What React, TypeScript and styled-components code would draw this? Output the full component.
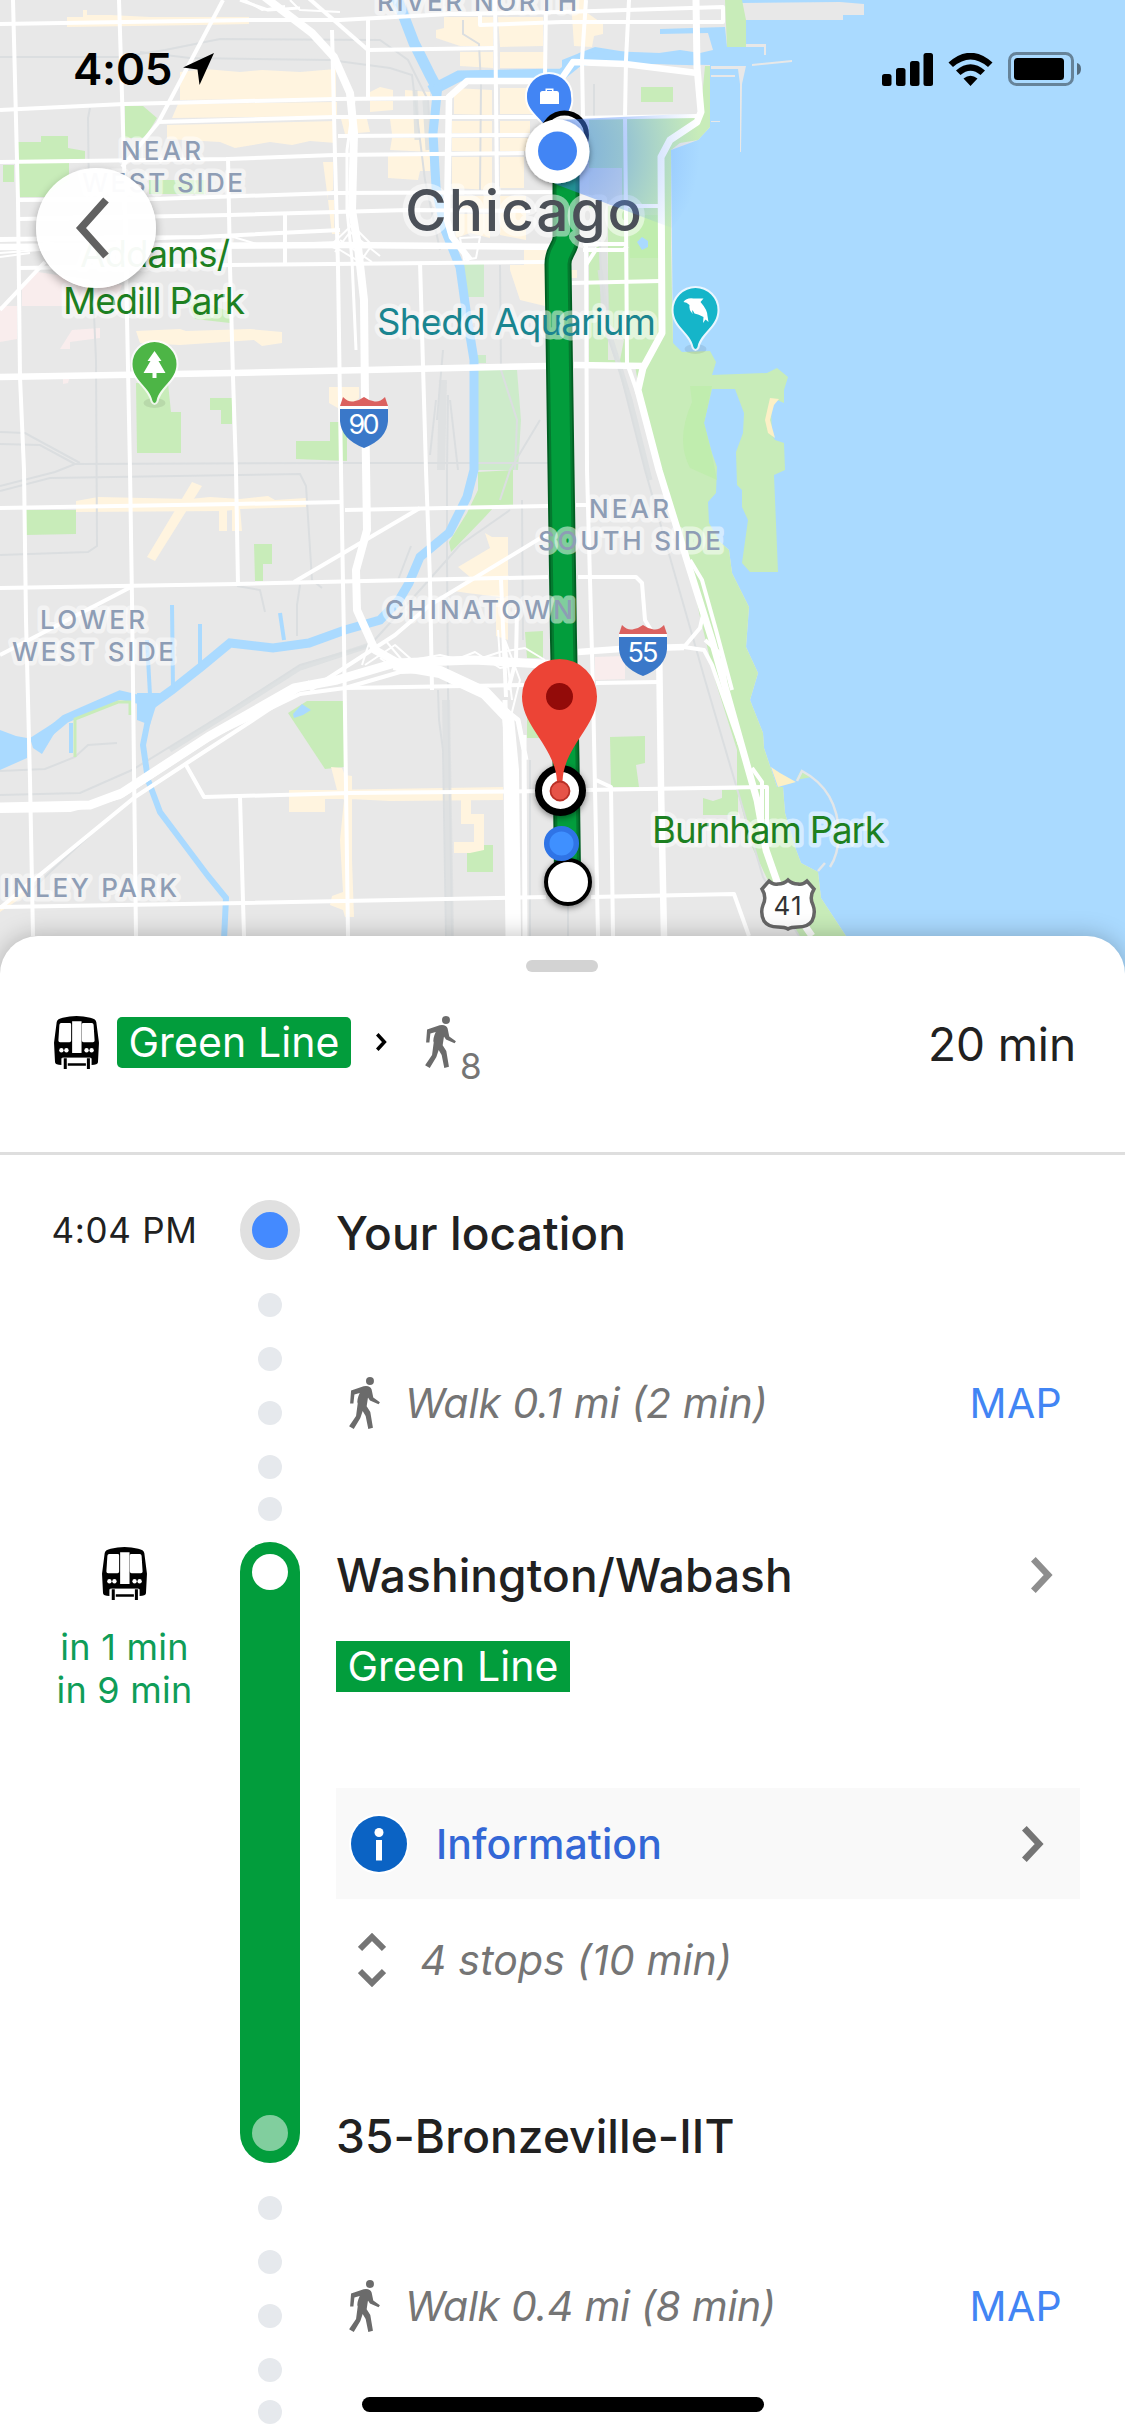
import React from "react";
import styled, { createGlobalStyle } from "styled-components";

const GlobalStyle = createGlobalStyle`
  body { margin: 0; background: #fff; }
  * { box-sizing: border-box; }
`;

const GREEN = "#029d3c";

const Screen = styled.main`
  position: relative;
  width: 1125px;
  height: 2436px;
  overflow: hidden;
  background: #fff;
  font-family: Inter, "Liberation Sans", sans-serif;
  color: #212121;
`;

/* ---------- map ---------- */

const MapArea = styled.section`
  position: relative;
  height: 936px;
`;

const MapCanvas = styled.svg`
  position: absolute;
  inset: 0;
  display: block;
  width: 1125px;
  height: 990px;
  font-family: Inter, "Liberation Sans", sans-serif;
`;

const StatusBar = styled.header`
  position: absolute;
  top: 0;
  left: 0;
  right: 0;
  display: flex;
  align-items: center;
  justify-content: space-between;
  height: 138px;
  padding: 0 44px 0 73px;
  color: #000;
`;

const Clock = styled.div`
  display: flex;
  align-items: center;
  gap: 11px;
  font-size: 44px;
  line-height: 50px;
  font-weight: 600;
  letter-spacing: -0.2px;
`;

const StatusIcons = styled.div`
  display: flex;
  align-items: center;
  gap: 15px;
`;

const BackButton = styled.button`
  position: absolute;
  left: 36px;
  top: 168px;
  display: flex;
  align-items: center;
  justify-content: center;
  width: 120px;
  height: 120px;
  padding: 0 8px 0 0;
  border: 0;
  border-radius: 50%;
  background: rgba(255, 255, 255, 0.96);
  box-shadow: 0 4px 10px rgba(0, 0, 0, 0.32);
`;

/* ---------- sheet ---------- */

const Sheet = styled.section`
  position: relative;
  height: 1500px;
  background: #fff;
  border-radius: 38px 38px 0 0;
  box-shadow: 0 0 24px rgba(0, 0, 0, 0.25);
`;

const SheetHeader = styled.header`
  display: flex;
  flex-direction: column;
  align-items: center;
  height: 219px;
  padding-top: 24px;
  border-bottom: 3px solid #dedede;
`;

const Handle = styled.div`
  width: 72px;
  height: 12px;
  margin-right: 1px;
  border-radius: 6px;
  background: #d3d3d3;
`;

const Summary = styled.div`
  display: flex;
  align-items: flex-start;
  width: 100%;
  margin-top: 44px;
  padding: 0 49px 0 54px;
`;

const LineBadge = styled.span<{ $rounded?: boolean }>`
  display: inline-block;
  height: 51px;
  width: 234px;
  margin-top: ${(p) => (p.$rounded ? "1px" : "0")};
  text-align: center;
  border-radius: ${(p) => (p.$rounded ? "5px" : "0")};
  background: ${GREEN};
  color: #fff;
  font-size: 41px;
  line-height: 50px;
  letter-spacing: 0.1px;
  white-space: nowrap;
`;

const LegSeparator = styled.span`
  display: flex;
  align-items: center;
  height: 51px;
  margin: 0 38px 0 25px;
`;

const WalkMinutes = styled.span`
  margin: 24px 0 0 4px;
  height: 40px;
  font-size: 35px;
  line-height: 52px;
  color: #757575;
`;

const Total = styled.span`
  margin-left: auto;
  font-size: 46px;
  line-height: 56px;
  letter-spacing: -0.1px;
  white-space: nowrap;
`;

const Gap = styled.span<{ $w: number }>`
  flex: none;
  width: ${(p) => p.$w}px;
`;

const Step = styled.article<{ $h: number }>`
  display: grid;
  grid-template-columns: 240px 60px 1fr;
  height: ${(p) => p.$h}px;
`;

const TimeCol = styled.div<{ $top: number }>`
  display: flex;
  flex-direction: column;
  align-items: center;
  padding: ${(p) => p.$top}px 0 0 9px;
`;

const Time = styled.span`
  font-size: 35px;
  line-height: 44px;
  letter-spacing: 0.7px;
  white-space: nowrap;
`;

const Arrivals = styled.div`
  margin-top: 26px;
  color: #0f9d58;
  font-size: 36px;
  line-height: 43px;
  letter-spacing: 0.25px;
  text-align: center;
  white-space: nowrap;
`;

const Rail = styled.div<{ $top: number }>`
  display: flex;
  flex-direction: column;
  align-items: center;
  padding-top: ${(p) => p.$top}px;
`;

const Origin = styled.div`
  width: 60px;
  height: 60px;
  margin-bottom: 33px;
  border: 12px solid #e0e0e0;
  border-radius: 50%;
  background: #448aff;
`;

const Dots = styled.div`
  display: flex;
  flex-direction: column;
  gap: 30px;
`;

const Dot = styled.i`
  width: 24px;
  height: 24px;
  border-radius: 50%;
  background: #e6e9ed;
  &:last-child { margin-top: -12px; }
`;

const RideBar = styled.div`
  display: flex;
  flex-direction: column;
  align-items: center;
  justify-content: space-between;
  height: 621px;
  padding: 12px 0;
  border-radius: 30px;
  background: ${GREEN};
`;

const Stop = styled.i<{ $faded?: boolean }>`
  width: 36px;
  height: 36px;
  border-radius: 50%;
  background: rgba(255, 255, 255, ${(p) => (p.$faded ? 0.5 : 1)});
`;

const Body = styled.div<{ $top: number }>`
  display: flex;
  flex-direction: column;
  align-items: flex-start;
  padding: ${(p) => p.$top}px 0 0 36px;
`;

const Place = styled.h2`
  margin: 0;
  font-size: 46px;
  line-height: 60px;
  font-weight: 500;
  letter-spacing: 0.1px;
  white-space: nowrap;
`;

const Row = styled.div<{ $mt?: number; $h: number; $pl?: number; $pr?: number; $shade?: boolean }>`
  display: flex;
  align-items: center;
  width: ${(p) => (p.$shade ? "744px" : "100%")};
  height: ${(p) => p.$h}px;
  margin-top: ${(p) => p.$mt ?? 0}px;
  padding-left: ${(p) => p.$pl ?? 0}px;
  padding-right: ${(p) => p.$pr ?? 0}px;
  background: ${(p) => (p.$shade ? "#f9f9f9" : "transparent")};
`;

const Detail = styled.span<{ $track?: number }>`
  font-size: 41px;
  line-height: 52px;
  font-style: italic;
  letter-spacing: ${(p) => p.$track ?? 0}px;
  color: #757575;
  white-space: nowrap;
`;

const MapLink = styled.a`
  margin-left: auto;
  font-size: 41px;
  line-height: 52px;
  letter-spacing: 0.3px;
  color: #4285f4;
`;

const InfoLabel = styled.span`
  margin-left: 27px;
  font-size: 41px;
  line-height: 52px;
  font-weight: 500;
  letter-spacing: 0.1px;
  color: #3367d6;
`;

const Push = styled.span`
  display: flex;
  margin-left: auto;
`;

const HomeIndicator = styled.div`
  position: absolute;
  left: 362px;
  bottom: 24px;
  width: 402px;
  height: 15px;
  border-radius: 8px;
  background: #000;
`;

const Glyph = styled.svg`
  display: block;
  flex: none;
`;

/* ---------- icons ---------- */

const TrainIcon = () => (
  <Glyph width="45" height="53" viewBox="0 0 134 158">
    <path d="M8 18Q10 8 26 5Q67 -5 108 5Q124 8 126 18L134 80L131 138Q130 146 112 146V126H22V146Q4 146 3 138L0 80Z" fill="#000" />
    <path d="M21 21H47Q51 21 51 25V73Q51 78 46 78H18Q13 78 13 73L16 26Q17 21 21 21ZM113 21H87Q83 21 83 25V73Q83 78 88 78H116Q121 78 121 73L118 26Q117 21 113 21ZM54 16H82V110H54Z" fill="#fff" />
    <g fill="#fff">
      <circle cx="22" cy="102" r="6.5" /><circle cx="37" cy="102" r="6.5" />
      <circle cx="97" cy="102" r="6.5" /><circle cx="112" cy="102" r="6.5" />
      <path d="M25 124H109V158H25Z" />
    </g>
    <path d="M29 126H38V158H29ZM98 126H107V158H98ZM41 141H95V148H41Z" fill="#000" />
  </Glyph>
);

const WalkIcon = () => (
  <Glyph width="31" height="52" viewBox="0 0 93 157" fill="#6b6b6b">
    <circle cx="63" cy="12" r="12" />
    <path d="M6 41L44 28Q64 25 68 38L73 62L93 76L89 82L63 71L57 62L53 88L64 106L72 153L58 157L50 118L41 103L34 124L14 157L0 149L21 118L26 80Q22 70 32 48L16 53L13 80L3 80Z" />
  </Glyph>
);

const Chevron = ({ color, w = 22, h = 36, s = 6.5 }: { color: string; w?: number; h?: number; s?: number }) => (
  <Glyph width={w} height={h} viewBox={`0 0 ${w} ${h}`} fill="none" stroke={color} strokeWidth={s}>
    <path d={`M${s * 0.36} ${s * 0.36}L${w - s * 0.75} ${h / 2}L${s * 0.36} ${h - s * 0.36}`} />
  </Glyph>
);

const ExpandIcon = () => (
  <Glyph width="28" height="54" viewBox="0 0 28 54" fill="none" stroke="#757575" strokeWidth="6">
    <path d="M2 16L14 4L26 16M2 38L14 50L26 38" />
  </Glyph>
);

const InfoIcon = () => (
  <Glyph width="60" height="60" viewBox="0 0 60 60">
    <circle cx="30" cy="30" r="30" fill="#fff" />
    <circle cx="30" cy="30" r="28" fill="#0b63c4" />
    <circle cx="30" cy="18.500" r="4.500" fill="#fff" />
    <path d="M27 26H33V46.500H27Z" fill="#fff" />
  </Glyph>
);

const LocationArrow = () => (
  <Glyph width="31" height="32" viewBox="0 0 31 32"><path d="M31 0L16.500 32L14.500 16.500L0 14.500Z" /></Glyph>
);

const SignalIcon = () => (
  <Glyph width="51" height="33" viewBox="0 0 51 33">
    <rect x="0" y="21" width="9.500" height="12" rx="2.500" />
    <rect x="14" y="15" width="9.500" height="18" rx="2.500" />
    <rect x="28" y="8" width="9.500" height="25" rx="2.500" />
    <rect x="41.500" y="0" width="9.500" height="33" rx="2.500" />
  </Glyph>
);

const WifiIcon = () => (
  <Glyph width="45" height="33" viewBox="0.500 0 45 33">
    <path d="M1 9.500Q23 -10 45 9.500L40.500 14Q23 -1 5.500 14ZM8.500 17.500Q23 5 37.500 17.500L33 22Q23 13.500 13 22ZM16 25.500Q23 20 30 25.500L23 33Z" />
  </Glyph>
);

const BatteryIcon = () => (
  <Glyph width="73" height="34" viewBox="0 0 73 34">
    <rect x="1.500" y="1.500" width="63" height="31" rx="7" fill="none" stroke="#000" strokeOpacity=".4" strokeWidth="3" />
    <rect x="6" y="6" width="50" height="22" rx="3.500" />
    <path d="M69 11Q73 12 73 17T69 23Z" fillOpacity=".5" />
  </Glyph>
);

/* ---------- map drawing ---------- */

const beige = [
  "M67 17H83V10H87V15H110L150 17H249V24L200 25L67 27Z",
  "M180 72L205 69L240 72L262 70L300 72L336 69V98L180 100Z",
  "M178 104L337 102V116L172 118Z",
  "M167 125L336 121V143L310 141L292 145L270 142L235 148L220 142L167 139Z",
  "M444 17H493V46H460L436 38V30L444 28ZM498 17H543V46L500 47ZM500 52H545V68H500ZM460 52H493V68L460 66Z",
  "M370 92L380 87L393 90V97H370ZM370 101H393V110L370 112ZM405 90L430 92V97H405Z",
  "M341 119H367L370 132L345 134ZM390 119H433V134H392ZM392 138H432V152L390 150ZM388 156H430V171H420L418 180L388 178Z",
  "M454 88L492 90V115L454 114ZM500 88H541V114H500ZM452 121H492V133H452ZM500 121H530V133H500ZM452 138H492V152L452 151ZM500 138H528V151H500ZM452 157H492V190L452 188ZM500 157H524V188H500ZM454 196H492V210H454ZM500 196H526V240L500 235ZM454 214H490V238L470 233L456 238Z",
  "M323 162H333V190L328 192V200H334V227L341 234H332L328 200Z",
  "M524 249H549V307L520 300L510 270L510 265H524Z",
  "M136 331L180 329L186 331L250 329L282 332V343L262 346L254 340L180 345L140 343Z",
  "M329 387H359V398L345 412L329 403Z",
  "M76 501L98 497L190 499L210 497L240 499L268 496L275 500L306 498V507L240 509L225 511L76 512Z",
  "M192 482L202 486L155 561L147 557Z",
  "M219 508H227V531H219ZM232 508H240L242 531H232Z",
  "M485 533L492 537H508V598L467 593L454 591L470 577L458 567L490 548ZM496 598H508V640L496 636Z",
  "M289 790H325V812H289ZM325 790L503 787V800L390 801L350 799H325ZM331 767L342 768L345 775L352 776V860L354 917H345L343 910L330 905L332 896L343 892L340 840L344 800L337 790Z",
  "M461 797H471V814H484V850L470 853H454V842H474V824H461Z",
  "M0 907L30 880V892L0 912Z",
  "M571 0H586V12L603 24V34L594 36L592 47L574 46Z",
  "M571 270H577V278H571Z",
];

const green = [
  "M18 142H41V136H68V148L85 151V159H69V180L45 197H18Z",
  "M3 165H14V182H3Z", "M125 106L143 106L157 118L145 138L125 138Z", "M149 180H206V194H149Z",
  "M136 383H168L171 412H181V453H137Z", "M210 398H232V424H221V410H210Z",
  "M296 441H330V422H347V461L296 459Z", "M185 297L205 302L230 312V323L195 319Z",
  "M26 510H76V534L26 535Z", "M254 544H272V564H263V581H255Z",
  "M288 713L307 701H344V767L325 769Z", "M467 845H493V872H467Z", "M525 632L543 631V658H527Z",
  "M527 713H550V738H527Z", "M610 737L645 736V763L636 765L639 787L611 787Z",
  "M703 798L713 801L722 798V790H738V815H703Z", "M641 87H673V102H641Z",
  "M478 472L513 470V505L494 507L484 518L451 552L449 542L467 513L478 490Z",
];

const rails = [
  "M0 57H120L165 50L220 39L380 40L408 60L428 100L432 160", "M140 52L190 58L330 60L390 68L412 75L425 180L440 250",
  "M90 108L88 118L89 200L96 360L97 546L88 552L0 555", "M0 432L25 433L80 463", "M0 444L40 445L75 464",
  "M0 486L55 472L75 464L340 463L562 463", "M0 491L50 478L300 474L306 486L312 580L322 588",
  "M448 395L447 470V560L448 690L452 936", "M436 400L430 455M450 400L458 470M443 350L437 420",
  "M500 265L501 370L517 420L515 470M540 420L528 440L510 470L500 500",
  "M0 795L80 793L132 770L230 710L300 665L370 645L420 590L460 545L510 510",
  "M438 690L439 720L443 750L446 936", "M0 771L45 769L75 757L88 745L117 743", "M27 895L50 872L90 835L125 805",
  "M237 586L260 590L265 612M300 585L297 605L297 636M411 546L398 580",
  "M463 20V34L479 44L481 85L480 190", "M600 240L602 320L621 375L645 470L705 680L763 877L799 936",
  "M522 500L523 640M530 760V936M568 900V936M594 84V118",
];

const minorRoads = [
  "M13 0L18 200L20 377L24 470L26 620L30 780L33 936", "M119 0L124 160L127 317L130 470L132 600L136 936",
  "M228 157L230 267L233 377L236 470L238 585M240 797L244 936", "M332 30L335 157L338 267L341 470L344 640L348 936",
  "M368 20V98", "M420 262L426 470L430 580L432 690", "M495 0L497 190", "M546 0L545 77",
  "M285 212V263", "M223 0L158 123L122 167", "M305 -5L368 50",
  "M0 24L251 20L340 20L450 14L562 12L723 7V22L562 22L480 25V14", "M368 50L495 48", "M0 110L124 104L334 99L447 98",
  "M158 122L334 117L540 117", "M338 136L530 135", "M0 162L228 159L334 155L524 153",
  "M18 200L155 199L334 193L562 192", "M18 219L230 215L408 210L530 211", "M0 239L200 237L340 230",
  "M18 268L230 265L546 262", "M45 262L0 310", "M0 508L235 504L343 502M345 510L548 506",
  "M0 588L237 584L548 577", "M562 525L430 605L395 635L310 690", "M420 508L294 582", "M131 587L0 655",
  "M0 908L36 878L135 797L187 763L250 722L310 682", "M186 765L204 797L350 793L548 791", "M345 688L524 685",
  "M0 907L244 903L546 897", "M501 580L506 697", "M517 610L516 660L508 690",
  "M586 0L582 60L583 117", "M586 243L587 470L593 690L598 936", "M629 0L626 60L625 117L626 213L627 363L640 400",
  "M575 118L697 116", "M626 206H660", "M583 244H627M583 250H624L627 246M586 265L597 248", "M572 283L661 281",
  "M576 505H588", "M578 577H636L642 583L645 620L652 632", "M684 647L704 650L712 665L740 745", "M684 647L700 628L704 610",
  "M596 683L659 682", "M586 790L767 787V840", "M596 780L611 787L613 936", "M591 897L734 894L749 936",
  "M690 560L702 580L716 630L732 690", "M705 640L722 655L726 690L742 745", "M752 768L762 782V820",
];

const majorRoads = [
  "M0 377L233 373L546 366", "M562 81H467L449 97L447 220L452 237L470 260", "M562 78L573 62L625 64L697 73",
  "M574 365L645 366", "M578 652L620 649L684 647", "M659 640L661 787L664 936", "M0 247L155 246L345 245L562 247",
];

const freeways: [string, number][] = [
  ["M262 -5L312 33L334 57L350 93L354 133L352 210L358 247L364 300L365 400L367 530L356 570L357 610L375 650L400 664", 8],
  ["M354 100L347 150L347 210L352 260L356 350M240 0L268 10L300 8", 3],
  ["M0 807L90 805L122 793L208 737L294 688L337 680L395 663L474 660L560 665", 9],
  ["M0 811L70 810L120 797L215 735L300 694L345 688L400 672L430 671", 4],
  ["M394 664L440 672L485 693L508 717L513 770L515 936", 12], ["M505 700L508 936M524 735L525 936M480 690L518 720L526 760", 5],
  ["M696 0L697 67L701 112L697 122L670 140L661 157L662 333L643 368L638 390L659 470L690 570L712 640L740 740L757 800L766 850L780 890L812 936", 7],
];

const ramps = [
  "M330 246L352 225L372 245L360 262L340 250Z", "M340 240L372 262M335 252L350 232L380 256", "M0 253L40 250L160 239L230 236L260 245L340 242",
  "M0 241L40 240L60 246M0 257L30 253", "M460 238L480 237L476 258L464 260Z", "M365 665L395 645L412 660L440 655L470 662L500 652L525 648L545 660",
  "M380 658L400 672L430 665M450 662L475 652L500 668L530 662M505 640L520 680L510 720M500 660L498 630M512 700L505 640", "M290 0L300 10L340 12M245 0L262 10L285 6",
  "M370 640L362 665M385 640L402 660L440 668",
];

type LabelProps = { x: number; y: number; w: number; size?: number; color: string; weight?: number; children: string };

const Label = ({ x, y, w, size = 26, color, weight = 500, children }: LabelProps) => (
  <text
    x={x} y={y} textLength={w} fontSize={size} fontWeight={weight} fill={color}
    stroke="#fff" strokeOpacity=".5" strokeWidth={size > 40 ? 11 : 9} strokeLinejoin="round" paintOrder="stroke"
  >
    {children}
  </text>
);

const AREA = "#8e9db5";
const PARK = "#1d8021";

const Interstate = ({ x, y, n }: { x: number; y: number; n: string }) => (
  <g transform={`translate(${x} ${y})`}>
    <path d="M3 0Q9 6 15 4Q20 3 24 0Q28 3 33 4Q39 6 45 0L48 9H0Z" fill="#db615f" />
    <path d="M0 9H48V12H0Z" fill="#fff" />
    <path d="M0 12H48V24Q47 42 24 51Q1 42 0 24Z" fill="#3a78c9" />
    <text x="24" y="37" fontSize="27" textAnchor="middle" textLength="31" fill="#fff">{n}</text>
  </g>
);

const PoiPin = ({ x, y, color, children }: { x: number; y: number; color: string; children: React.ReactNode }) => (
  <g transform={`translate(${x} ${y})`}>
    <ellipse cx="0" cy="39" rx="11" ry="5" fill="#000" opacity=".08" />
    <path d="M0 -22A22 22 0 0 0 -22 0C-22 17 -5 22 -2 37Q0 41 2 37C5 22 22 17 22 0A22 22 0 0 0 0 -22Z" fill={color} stroke="#fff" strokeOpacity=".75" strokeWidth="4" paintOrder="stroke" />
    {children}
  </g>
);

const ROUTE = "M566 150V238Q566 243 562 250Q558 257 558 264L561 470L563.500 640L566 760L567.500 872";

const CityMap = () => (
  <MapCanvas viewBox="0 0 1125 990">
    <defs>
      <radialGradient id="beam" gradientUnits="userSpaceOnUse" cx="558" cy="150" r="142">
        <stop offset="0" stopColor="#3f7cf5" stopOpacity=".6" />
        <stop offset=".5" stopColor="#4a86f7" stopOpacity=".38" />
        <stop offset="1" stopColor="#5b95fa" stopOpacity="0" />
      </radialGradient>
      <filter id="drop" x="-30%" y="-30%" width="160%" height="170%">
        <feDropShadow dx="0" dy="2" stdDeviation="3" floodOpacity=".45" />
      </filter>
    </defs>
    <rect width="1125" height="990" fill="#aadaff" />
    <path fill="#e8e8e8" d="M0 0H742V20L746 47H727L725 27L660 29V34L708 33L713 50L700 53L680 50L645 55L595 47L582 52L562 60V70L600 63L710 65V127L698 140L671 150L673 343L690 500L720 542L729 550L732 573L749 607L746 647L758 673L750 700L763 733L764 748L777 787H783L785 813L795 847L801 863L818 872L821 898L846 936L875 990H0Z" />
    <path fill="#e8e8e8" d="M741 3L840 2L864 4V15H843V20H741ZM746 44H766V55H764V47H746ZM711 66H746L742 84L741 152H740V84L738 69H711ZM711 75H735V77H711ZM752 64L792 60V62L752 66ZM711 121H720V122H711Z" />
    <path fill="#c8ecb9" d="M701 0H742L746 20V47H727L725 0Z" />
    <path fill="#c8ecb9" d="M589 118L700 118L705 66H710V127L698 140L680 143L671 150V247L673 343L682 352L710 351L716 362L712 375L767 373L777 368L788 377L784 390V403L775 399L771 407L772 435L775 440L784 443L785 470L774 475L778 572H750L742 563L748 520L742 507V490L737 485L736 452L743 433L744 413L735 389H712L704 423L712 453L717 467L716 493L708 502L709 523L720 542L729 550L732 573L749 607L746 647L758 673L750 700L763 733L764 748L777 787H783L785 813L795 847L801 863L818 872L821 898L846 936L875 990H830L799 936L774 893L752 847L737 790V750L716 683L700 617L688 560L659 467L639 390L635 365H589V250L603 245L603 208H589Z" />
    <path fill="#e8e8e8" d="M589 168H622V206H589ZM596 206H608V360H620L624 340L606 320Z" opacity=".9" />
    <path fill="#c0edae" d="M630 215H659V258H630ZM690 386H712L704 423L712 455L717 480L690 468Q675 440 692 402Z" />
    <path fill="#fcf0c6" d="M770 398L779 399L774 405L770 420L775 438L768 433L765 420ZM771 767L780 773L796 782L778 787Z" />
    <path fill="#c8ecb9" d="M796 780L801 770L812 777Z" />
    <path fill="none" stroke="#e3e6e8" strokeWidth="2.500" d="M797 781L802 771Q838 790 839 835Q838 855 830 867M818 871L825 863" />
    <path fill="#f9eded" d="M0 306H22V285L38 272L122 285L118 295L85 306H17V339L0 342ZM72 330L100 328V338L70 342V349H60ZM63 378L70 376L68 383L63 384ZM595 657L625 656V679L595 680Z" />
    {green.map((d) => <path key={d} d={d} fill="#c8ecb9" />)}
    <path fill="#cdebca" d="M463 263H484V297H467ZM476 355H486V363H476ZM477 370H517L521 420L518 470H478Z" />
    {beige.map((d) => <path key={d} d={d} fill="#fff4df" />)}
    <g fill="none" stroke="#dbdee0" strokeWidth="2">
      {rails.map((d) => <path key={d} d={d} />)}
      <path strokeWidth="8" opacity=".7" d="M446 700L450 936M443 380L441 470M603 250L606 325" />
      <path strokeWidth="5" opacity=".8" d="M600 270L608 330L630 400L650 480M170 750L300 668L370 645M415 90L417 140M425 100L428 150" />
    </g>
    <g fill="none" stroke="#aadaff">
      <path strokeWidth="11" d="M396 -4L414 43L430 75L438 90M430 91L459 76L562 74L582 58L620 57L700 60" />
      <path strokeWidth="9" d="M438 85L433 133L436 187L445 230L460 267L467 317L474 360V470L467 497L449 533L420 557L409 583L399 600L380 620L345 630L309 643L273 648L230 643L201 667L172 690L154 703L120 695L65 719L40 740" />
      <path strokeWidth="6" d="M150 710L143 745L148 780L160 812L184 844L208 876L226 898L224 940" />
      <path strokeWidth="4" d="M172 605L173 690M200 624V668M147 640L150 695M280 613L284 640M71 723V753M660 31H713" />
    </g>
    <path fill="#aadaff" d="M0 730L16 736L27 738V758L0 770ZM137 693H160L150 725L137 720ZM30 738L55 722L60 724L42 754L33 748ZM293 714L302 704L311 710L303 715L294 718ZM637 242L642 237L648 241V247L642 250Z" />
    <path fill="none" stroke="#c8ecb9" strokeWidth="3" d="M75 757V719L118 702H130V715" />
    <g fill="none" stroke="#fff" strokeLinejoin="round">
      <g strokeWidth="4">{minorRoads.map((d) => <path key={d} d={d} />)}</g>
      <g strokeWidth="6.500">{majorRoads.map((d) => <path key={d} d={d} />)}</g>
      {freeways.map(([d, w]) => <path key={d} d={d} strokeWidth={w} />)}
      <g strokeWidth="2">{ramps.map((d) => <path key={d} d={d} />)}</g>
    </g>

    <path d="M549 74A22 22 0 0 0 527 97C527 110 538 115 547 128L566 118C571 105 572 103 571 96A22 22 0 0 0 549 74Z" fill="#4285f4" stroke="#fff" strokeOpacity=".9" strokeWidth="4" paintOrder="stroke" />
    <path d="M540 93.500Q540 91 542.500 91H545.500V88.500H553.500V91H557Q559 91 559 93.500V104H540ZM547 90V91H552V90Z" fill="#fff" fillRule="evenodd" />

    <g fill="none">
      <path d={ROUTE} stroke="#005e22" strokeWidth="27" />
      <path d={ROUTE} stroke="#04792f" strokeWidth="23.500" />
      <path d={ROUTE} stroke={GREEN} strokeWidth="19" />
    </g>
    <circle cx="564.500" cy="135" r="22" fill="#fff" stroke="#000" strokeWidth="5" />

    <Label x={377} y={10.500} w={200} color={AREA}>RIVER NORTH</Label>
    <Label x={121} y={160} w={80} color={AREA}>NEAR</Label>
    <Label x={82} y={192} w={161} color={AREA}>WEST SIDE</Label>
    <Label x={80} y={267} w={150} size={37} color={PARK} weight={400}>Addams/</Label>
    <Label x={63} y={314} w={182} size={37} color={PARK} weight={400}>Medill Park</Label>
    <Label x={405} y={230.500} w={237} size={57} color="#4b5058">Chicago</Label>
    <Label x={377} y={335} w={279} size={37} color="#1a8590" weight={400}>Shedd Aquarium</Label>
    <Label x={589} y={518} w={80} color={AREA}>NEAR</Label>
    <Label x={538} y={550} w={183} color={AREA}>SOUTH SIDE</Label>
    <Label x={385} y={619} w={188} color={AREA}>CHINATOWN</Label>
    <Label x={40} y={629} w={105} color={AREA}>LOWER</Label>
    <Label x={12} y={661} w={162} color={AREA}>WEST SIDE</Label>
    <Label x={3} y={897} w={174} color={AREA}>INLEY PARK</Label>
    <Label x={652} y={843} w={233} size={37} color={PARK} weight={400}>Burnham Park</Label>

    <Interstate x={340} y={397} n="90" />
    <Interstate x={619} y={625} n="55" />
    <g transform="translate(760 878)">
      <path d="M9 3Q13 7 18 6Q24 6 28 2Q32 6 38 6Q43 7 47 3L54 11Q49 19 53 27Q56 35 52 43Q48 49 38 49Q31 49 28 51Q25 49 18 49Q8 49 4 43Q0 35 3 27Q7 19 2 11Z" fill="#fff" stroke="#666" strokeWidth="3.500" />
      <text x="27.500" y="37" fontSize="26" textAnchor="middle" textLength="28" fill="#333">41</text>
    </g>

    <PoiPin x={154.500} y={364} color="#4db546">
      <path d="M0 -13L7 -3H4L11 9H2V14H-2V9H-11L-4 -3H-7Z" fill="#fff" />
    </PoiPin>
    <PoiPin x={695.500} y={310} color="#15b5c9">
      <path d="M-12 -8Q-9 -12.500 -2 -11.500L8 -11.500L5 -8Q12 0 12 6L13 12L10 9.500L7.500 13L8 7Q3 4 -1 3.500L-3 0Q-4 2 -2.500 4Q-7 0 -6 -5Q-9 -8 -12 -8Z" fill="#fff" />
    </PoiPin>

    <path d="M558 120L705 113Q712 180 672 228L555 184Z" fill="url(#beam)" />
    <circle cx="557.500" cy="151.500" r="32" fill="#fff" filter="url(#drop)" />
    <circle cx="557.500" cy="151" r="19.500" fill="#4285f4" />

    <circle cx="568" cy="882" r="22" fill="#fff" stroke="#000" strokeWidth="4" filter="url(#drop)" />
    <circle cx="561.500" cy="843.500" r="14.800" fill="#3f90ff" stroke="#2f74e6" strokeWidth="5.500" />
    <circle cx="560.500" cy="790.500" r="22" fill="#fff" stroke="#000" strokeWidth="7" filter="url(#drop)" />
    <path d="M559.500 659A37.500 37.500 0 0 0 522 696.500C522 727 555 746 557 781H562.500C564 746 597 727 597 696.500A37.500 37.500 0 0 0 559.500 659Z" fill="#ec4436" />
    <circle cx="560" cy="791" r="9.500" fill="#e65348" stroke="#b92f26" strokeWidth="1.800" />
    <circle cx="559.500" cy="696.500" r="13.500" fill="#930b09" />
  </MapCanvas>
);

const DotTrail = () => (
  <Dots>{[0, 1, 2, 3, 4].map((i) => <Dot key={i} />)}</Dots>
);

const WalkRow = ({ mt, text, track }: { mt: number; text: string; track?: number }) => (
  <Row $mt={mt} $h={52} $pl={13} $pr={63}>
    <WalkIcon />
    <Gap $w={25} />
    <Detail $track={track}>{text}</Detail>
    <MapLink>MAP</MapLink>
  </Row>
);

export default function App() {
  return (
    <Screen>
      <GlobalStyle />
      <MapArea>
        <CityMap />
        <StatusBar>
          <Clock>4:05<LocationArrow /></Clock>
          <StatusIcons><SignalIcon /><WifiIcon /><BatteryIcon /></StatusIcons>
        </StatusBar>
        <BackButton aria-label="Back">
          <Glyph width="34" height="62" viewBox="0 0 34 62" fill="none" stroke="#616161" strokeWidth="7.500">
            <path d="M31 3L6 31L31 59" />
          </Glyph>
        </BackButton>
      </MapArea>

      <Sheet>
        <SheetHeader>
          <Handle />
          <Summary>
            <TrainIcon />
            <Gap $w={18} />
            <LineBadge $rounded>Green Line</LineBadge>
            <LegSeparator><Chevron color="#000" w={11} h={18} s={3.5} /></LegSeparator>
            <WalkIcon />
            <WalkMinutes>8</WalkMinutes>
            <Total>20 min</Total>
          </Summary>
        </SheetHeader>

        <Step $h={387}>
          <TimeCol $top={53}><Time>4:04 PM</Time></TimeCol>
          <Rail $top={45}><Origin /><DotTrail /></Rail>
          <Body $top={48}>
            <Place>Your location</Place>
            <WalkRow mt={114} text="Walk 0.1 mi (2 min)" />
          </Body>
        </Step>

        <Step $h={621}>
          <TimeCol $top={5}>
            <TrainIcon />
            <Arrivals>in 1 min<br />in 9 min</Arrivals>
          </TimeCol>
          <RideBar><Stop /><Stop $faded /></RideBar>
          <Body $top={3}>
            <Row $h={60} $pr={72}>
              <Place>Washington/Wabash</Place>
              <Push><Chevron color="#8e8e8e" /></Push>
            </Row>
            <Row $mt={36} $h={51}><LineBadge>Green Line</LineBadge></Row>
            <Row $mt={96} $h={111} $pl={13} $pr={36} $shade>
              <InfoIcon />
              <InfoLabel>Information</InfoLabel>
              <Push><Chevron color="#757575" /></Push>
            </Row>
            <Row $mt={33} $h={56} $pl={22}>
              <ExpandIcon />
              <Gap $w={34} />
              <Detail $track={0.15}>4 stops (10 min)</Detail>
            </Row>
            <Row $mt={118} $h={60}><Place>35-Bronzeville-IIT</Place></Row>
          </Body>
        </Step>

        <Step $h={273}>
          <TimeCol $top={0} />
          <Rail $top={33}><DotTrail /></Rail>
          <Body $top={0}>
            <WalkRow mt={117} text="Walk 0.4 mi (8 min)" track={-0.3} />
          </Body>
        </Step>
      </Sheet>
      <HomeIndicator />
    </Screen>
  );
}
